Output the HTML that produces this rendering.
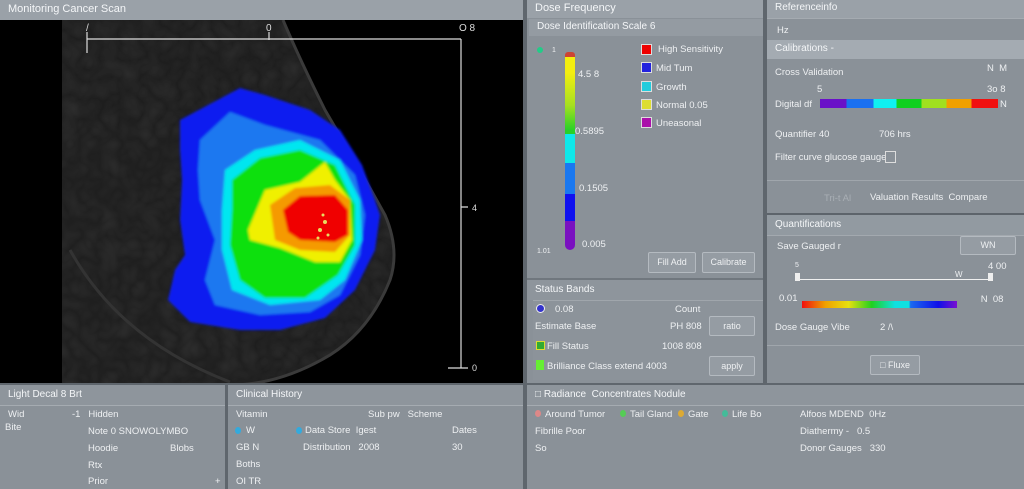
<!DOCTYPE html>
<html><head><meta charset="utf-8"><style>
*{margin:0;padding:0;box-sizing:border-box}
body{width:1024px;height:489px;overflow:hidden;background:#5f666d;font-family:"Liberation Sans",sans-serif;color:#f0f2f4;font-size:10px;position:relative}
.a{position:absolute}
.p{position:absolute;background:#8a9198}
.h{position:absolute;background:#9aa1a8;font-size:11px;padding:3px 8px;color:#f4f6f8;white-space:nowrap}
.t{position:absolute;white-space:nowrap;font-size:9.5px;color:#eef0f2}
.btn{position:absolute;border:1px solid #b4bac0;background:#959ca3;border-radius:2px;font-size:9px;text-align:center;color:#eef0f2}
.sw{position:absolute;width:11px;height:11px;border:1px solid #ddd}
</style></head><body>

<div class="h" style="left:0;top:0;width:523px;height:20px;">Monitoring Cancer Scan</div>
<div class="a" style="left:0;top:20px;width:523px;height:363px;background:#000;overflow:hidden">
<svg width="523" height="363" viewBox="0 20 523 363">
<defs>
<filter id="b1"><feGaussianBlur stdDeviation="1.2"/></filter>
<filter id="n"><feTurbulence baseFrequency="0.05" numOctaves="2" seed="3"/><feColorMatrix values="0 0 0 0 0.2 0 0 0 0 0.2 0 0 0 0 0.2 0 0 0 0.6 0"/></filter>
<clipPath id="cp"><path d="M62 20 L283 20 Q300 60 325 110 Q360 170 385 215 Q400 250 390 280 Q370 330 330 355 Q280 385 230 385 L62 385 Z"/></clipPath>
</defs>
<path d="M62 20 L283 20 Q300 60 325 110 Q360 170 385 215 Q400 250 390 280 Q370 330 330 355 Q280 385 230 385 L62 385 Z" fill="#1f1f1f"/>
<rect x="62" y="20" width="340" height="365" filter="url(#n)" opacity="0.3" clip-path="url(#cp)"/>
<path d="M283 20 Q300 60 325 110 Q360 170 385 215 Q400 250 390 280 Q370 330 330 355 Q280 385 230 385" stroke="#3a3a3a" stroke-width="3" fill="none"/>
<path d="M70 250 Q120 340 230 382" stroke="#333" stroke-width="3" fill="none"/>
<g filter="url(#b1)">
<path d="M180 120 L240 88 L265 95 L310 110 L340 130 L362 165 L375 200 L380 215 L375 250 L355 290 L325 318 L280 330 L240 330 L190 322 L168 300 L175 270 L185 255 L180 220 L182 180 L180 150 Z" fill="#0a1cf0"/>
<path d="M200 140 L230 112 L265 125 L320 140 L355 175 L365 215 L360 255 L340 295 L310 312 L260 315 L215 305 L205 280 L215 240 L200 200 L198 170 Z" fill="#1a78f0"/>
<path d="M225 170 L255 150 L300 140 L340 160 L360 200 L362 240 L345 280 L320 300 L270 305 L232 290 L222 250 L222 210 Z" fill="#00e6f0"/>
<path d="M232 180 L260 158 L300 150 L335 165 L355 205 L355 245 L338 275 L305 298 L265 298 L240 280 L230 245 L232 210 Z" fill="#10e010"/>
<path d="M248 230 L265 190 L300 182 L325 162 L335 180 L350 200 L352 240 L340 262 L315 262 L280 248 L250 240 Z" fill="#f0f000"/>
<path d="M270 205 L295 188 L330 185 L350 200 L350 235 L335 252 L300 250 L275 240 Z" fill="#f59a00"/>
<path d="M283 210 L300 196 L335 195 L348 210 L348 235 L335 242 L300 240 L288 232 Z" fill="#f00000"/>
</g>
<g fill="#e8dc60"><circle cx="320" cy="230" r="2"/><circle cx="325" cy="222" r="2"/><circle cx="318" cy="238" r="1.5"/><circle cx="328" cy="235" r="1.5"/><circle cx="323" cy="215" r="1.5"/></g>
<g stroke="#dcdcdc" stroke-width="1.2" fill="none">
<path d="M87 39 H461 M87 32 V53 M269 32 V40 M461 39 V368 M461 207 H468 M448 368 H468"/>
</g>
<text x="86" y="31" fill="#ddd" font-size="10">/</text>
<text x="266" y="31" fill="#ddd" font-size="10">0</text>
<text x="459" y="31" fill="#ddd" font-size="10">O 8</text>
<text x="472" y="211" fill="#ddd" font-size="9">4</text>
<text x="472" y="371" fill="#ddd" font-size="9">0</text>
</svg></div>

<div class="p" style="left:527px;top:0;width:236px;height:383px;"></div>
<div class="h" style="left:527px;top:0;width:236px;height:18px;padding-top:2px">Dose Frequency</div>
<div class="h" style="left:529px;top:19px;width:234px;height:17px;background:#949ba2;padding-top:2px;font-size:10px">Dose Identification Scale 6</div>
<div class="a" style="left:537px;top:47px;width:6px;height:6px;border-radius:50%;background:#2c8"></div>
<div class="t" style="left:552px;top:47px;font-size:7px">1</div>
<div class="a" style="left:565px;top:52px;width:10px;height:7px;background:#c43;border-radius:3px 3px 0 0"></div>
<div class="a" style="left:565px;top:57px;width:10px;height:193px;border-radius:0 0 5px 5px;background:linear-gradient(#f4ee10 0,#f4ee10 8%,#a6e020 25%,#28d028 38%,#28d028 40%,#10e8ea 40%,#10e8ea 55%,#1a78f0 55%,#1a78f0 71%,#1010f0 71%,#1010f0 85%,#7a10c0 85%)"></div>
<div class="t" style="left:578px;top:69px">4.5 8</div>
<div class="t" style="left:575px;top:126px">0.5895</div>
<div class="t" style="left:579px;top:183px">0.1505</div>
<div class="t" style="left:582px;top:239px">0.005</div>
<div class="t" style="left:537px;top:248px;font-size:7px">1.01</div>
<div class="sw" style="left:641px;top:44px;background:#e00"></div><div class="t" style="left:658px;top:44px">High Sensitivity</div>
<div class="sw" style="left:641px;top:62px;background:#22d"></div><div class="t" style="left:656px;top:63px">Mid Tum</div>
<div class="sw" style="left:641px;top:81px;background:#2cd"></div><div class="t" style="left:656px;top:82px">Growth</div>
<div class="sw" style="left:641px;top:99px;background:#dd3"></div><div class="t" style="left:656px;top:100px">Normal 0.05</div>
<div class="sw" style="left:641px;top:117px;background:#a1a"></div><div class="t" style="left:656px;top:118px">Uneasonal</div>
<div class="btn" style="left:648px;top:252px;width:48px;height:21px;line-height:19px">Fill Add</div>
<div class="btn" style="left:702px;top:252px;width:53px;height:21px;line-height:19px">Calibrate</div>

<div class="a" style="left:527px;top:278px;width:236px;height:2px;background:#70777e"></div>
<div class="h" style="left:527px;top:280px;width:236px;height:20px;background:#8e959c;padding-top:4px;font-size:10px">Status Bands</div>
<div class="a" style="left:533px;top:300px;width:230px;height:80px;background:#8c939a;border-top:1px solid #a0a6ac"></div>
<div class="a" style="left:536px;top:304px;width:9px;height:9px;border-radius:50%;background:#33c;border:1px solid #eee"></div>
<div class="t" style="left:555px;top:304px">0.08</div><div class="t" style="left:675px;top:304px">Count</div>
<div class="t" style="left:535px;top:321px">Estimate Base</div><div class="t" style="left:670px;top:321px">PH 808</div>
<div class="btn" style="left:709px;top:316px;width:46px;height:20px;line-height:18px">ratio</div>
<div class="a" style="left:536px;top:341px;width:9px;height:9px;background:#3a3;border:1px solid #dd3"></div>
<div class="t" style="left:547px;top:341px">Fill Status</div><div class="t" style="left:662px;top:341px">1008 808</div>
<div class="a" style="left:536px;top:360px;width:8px;height:10px;background:#6e3"></div>
<div class="t" style="left:547px;top:361px">Brilliance Class extend 4003</div>
<div class="btn" style="left:709px;top:356px;width:46px;height:20px;line-height:18px">apply</div>

<div class="p" style="left:767px;top:0;width:257px;height:383px;"></div>
<div class="h" style="left:767px;top:0;width:257px;height:18px;padding-top:2px;font-size:10px">Referenceinfo</div>
<div class="a" style="left:767px;top:18px;width:257px;height:1px;background:#a5abb1"></div>
<div class="t" style="left:777px;top:25px">Hz</div>
<div class="h" style="left:767px;top:40px;width:257px;height:19px;background:#a4abb2;padding-top:3px;font-size:10px">Calibrations -</div>
<div class="t" style="left:775px;top:67px">Cross Validation</div>
<div class="t" style="left:987px;top:63px">N &nbsp;M</div>
<div class="t" style="left:817px;top:84px">5</div><div class="t" style="left:987px;top:84px">3o 8</div>
<div class="t" style="left:775px;top:99px">Digital df</div>
<div class="a" style="left:820px;top:99px;width:178px;height:9px;background:linear-gradient(90deg,#6a10c8 0,#6a10c8 15%,#1a70f0 15%,#1a70f0 30%,#10f0f0 30%,#10f0f0 43%,#10d020 43%,#10d020 57%,#a0e020 57%,#a0e020 71%,#f0a000 71%,#f0a000 85%,#f01010 85%)"></div>
<div class="t" style="left:1000px;top:99px">N</div>
<div class="t" style="left:775px;top:129px">Quantifier 40</div><div class="t" style="left:879px;top:129px">706 hrs</div>
<div class="t" style="left:775px;top:152px">Filter curve glucose gauge</div>
<div class="a" style="left:885px;top:151px;width:11px;height:12px;border:1px solid #ddd"></div>
<div class="a" style="left:767px;top:180px;width:257px;height:1px;background:#a0a6ac"></div>
<div class="t" style="left:824px;top:193px;color:#a9afb5">Tri-t Al</div>
<div class="t" style="left:870px;top:192px">Valuation Results &nbsp;Compare</div>
<div class="a" style="left:767px;top:213px;width:257px;height:2px;background:#5d646b"></div>
<div class="h" style="left:767px;top:215px;width:257px;height:20px;background:#929aa1;padding-top:4px;font-size:10px">Quantifications</div>
<div class="a" style="left:767px;top:235px;width:257px;height:1px;background:#a3a9af"></div>
<div class="t" style="left:777px;top:241px">Save Gauged r</div>
<div class="btn" style="left:960px;top:236px;width:56px;height:19px;line-height:17px">WN</div>
<div class="t" style="left:795px;top:262px;font-size:7px">5</div><div class="t" style="left:988px;top:261px">4 00</div>
<div class="a" style="left:797px;top:279px;width:196px;height:1px;background:#f0f0f0"></div>
<div class="a" style="left:795px;top:273px;width:5px;height:8px;background:#eee"></div>
<div class="a" style="left:988px;top:273px;width:5px;height:8px;background:#eee"></div>
<div class="t" style="left:955px;top:270px;font-size:8px">W</div>
<div class="t" style="left:779px;top:293px">0.01</div>
<div class="a" style="left:802px;top:301px;width:155px;height:7px;background:linear-gradient(90deg,#f01010,#f0a000 15%,#e8e010 30%,#20d020 45%,#10e0e0 60%,#10e0e0 69%,#1a6af0 70%,#1010e8 88%,#7a10d0)"></div>
<div class="t" style="left:957px;top:294px">&nbsp;&nbsp;&nbsp;&nbsp;&nbsp;&nbsp;&nbsp;&nbsp; N &nbsp;08</div>
<div class="t" style="left:775px;top:322px">Dose Gauge Vibe</div>
<div class="t" style="left:880px;top:322px">2 /\</div>
<div class="a" style="left:767px;top:345px;width:257px;height:1px;background:#a0a6ac"></div>
<div class="btn" style="left:870px;top:355px;width:50px;height:20px;line-height:18px">&#9633; Fluxe</div>

<div class="p" style="left:0;top:385px;width:225px;height:104px;"></div>
<div class="h" style="left:0;top:385px;width:225px;height:20px;background:#8e959c;padding-top:4px;font-size:10px">Light Decal 8 Brt</div>
<div class="a" style="left:0;top:405px;width:225px;height:1px;background:#a5abb1"></div>
<div class="t" style="left:8px;top:409px">Wid</div><div class="t" style="left:72px;top:409px">-1 &nbsp;&nbsp;Hidden</div>
<div class="t" style="left:5px;top:422px">Bite</div>
<div class="t" style="left:88px;top:426px">Note 0 SNOWOLYMBO</div>
<div class="t" style="left:88px;top:443px">Hoodie</div><div class="t" style="left:170px;top:443px">Blobs</div>
<div class="t" style="left:88px;top:460px">Rtx</div>
<div class="t" style="left:88px;top:476px">Prior</div><div class="t" style="left:215px;top:476px">+</div>

<div class="p" style="left:228px;top:385px;width:295px;height:104px;"></div>
<div class="h" style="left:228px;top:385px;width:295px;height:20px;background:#8e959c;padding-top:4px;font-size:10px">Clinical History</div>
<div class="a" style="left:228px;top:405px;width:295px;height:1px;background:#a5abb1"></div>
<div class="t" style="left:236px;top:409px">Vitamin</div><div class="t" style="left:368px;top:409px">Sub pw &nbsp;&nbsp;Scheme</div>
<div class="a" style="left:235px;top:427px;width:6px;height:7px;border-radius:50%;background:#3ad"></div><div class="t" style="left:246px;top:425px">W</div>
<div class="a" style="left:296px;top:427px;width:6px;height:7px;border-radius:50%;background:#3ad"></div><div class="t" style="left:305px;top:425px">Data Store &nbsp;Igest</div><div class="t" style="left:452px;top:425px">Dates</div>
<div class="t" style="left:236px;top:442px">GB N</div><div class="t" style="left:303px;top:442px">Distribution &nbsp;&nbsp;2008</div><div class="t" style="left:452px;top:442px">30</div>
<div class="t" style="left:236px;top:459px">Boths</div>
<div class="t" style="left:236px;top:476px">OI TR</div>

<div class="p" style="left:527px;top:385px;width:497px;height:104px;"></div>
<div class="h" style="left:527px;top:385px;width:497px;height:20px;background:#8e959c;padding-top:4px;font-size:10px">&#9633; Radiance &nbsp;Concentrates Nodule</div>
<div class="a" style="left:527px;top:405px;width:497px;height:1px;background:#a5abb1"></div>
<div class="a" style="left:535px;top:410px;width:6px;height:7px;border-radius:50%;background:#d88"></div><div class="t" style="left:545px;top:409px">Around Tumor</div>
<div class="a" style="left:620px;top:410px;width:6px;height:7px;border-radius:50%;background:#5c5"></div><div class="t" style="left:630px;top:409px">Tail Gland</div>
<div class="a" style="left:678px;top:410px;width:6px;height:7px;border-radius:50%;background:#da3"></div><div class="t" style="left:688px;top:409px">Gate</div>
<div class="a" style="left:722px;top:410px;width:6px;height:7px;border-radius:50%;background:#4b9"></div><div class="t" style="left:732px;top:409px">Life Bo</div>
<div class="t" style="left:800px;top:409px">Alfoos MDEND &nbsp;0Hz</div>
<div class="t" style="left:535px;top:426px">Fibrille Poor</div>
<div class="t" style="left:800px;top:426px">Diathermy - &nbsp;&nbsp;0.5</div>
<div class="t" style="left:535px;top:443px">So</div>
<div class="t" style="left:800px;top:443px">Donor Gauges &nbsp;&nbsp;330</div>
</body></html>
